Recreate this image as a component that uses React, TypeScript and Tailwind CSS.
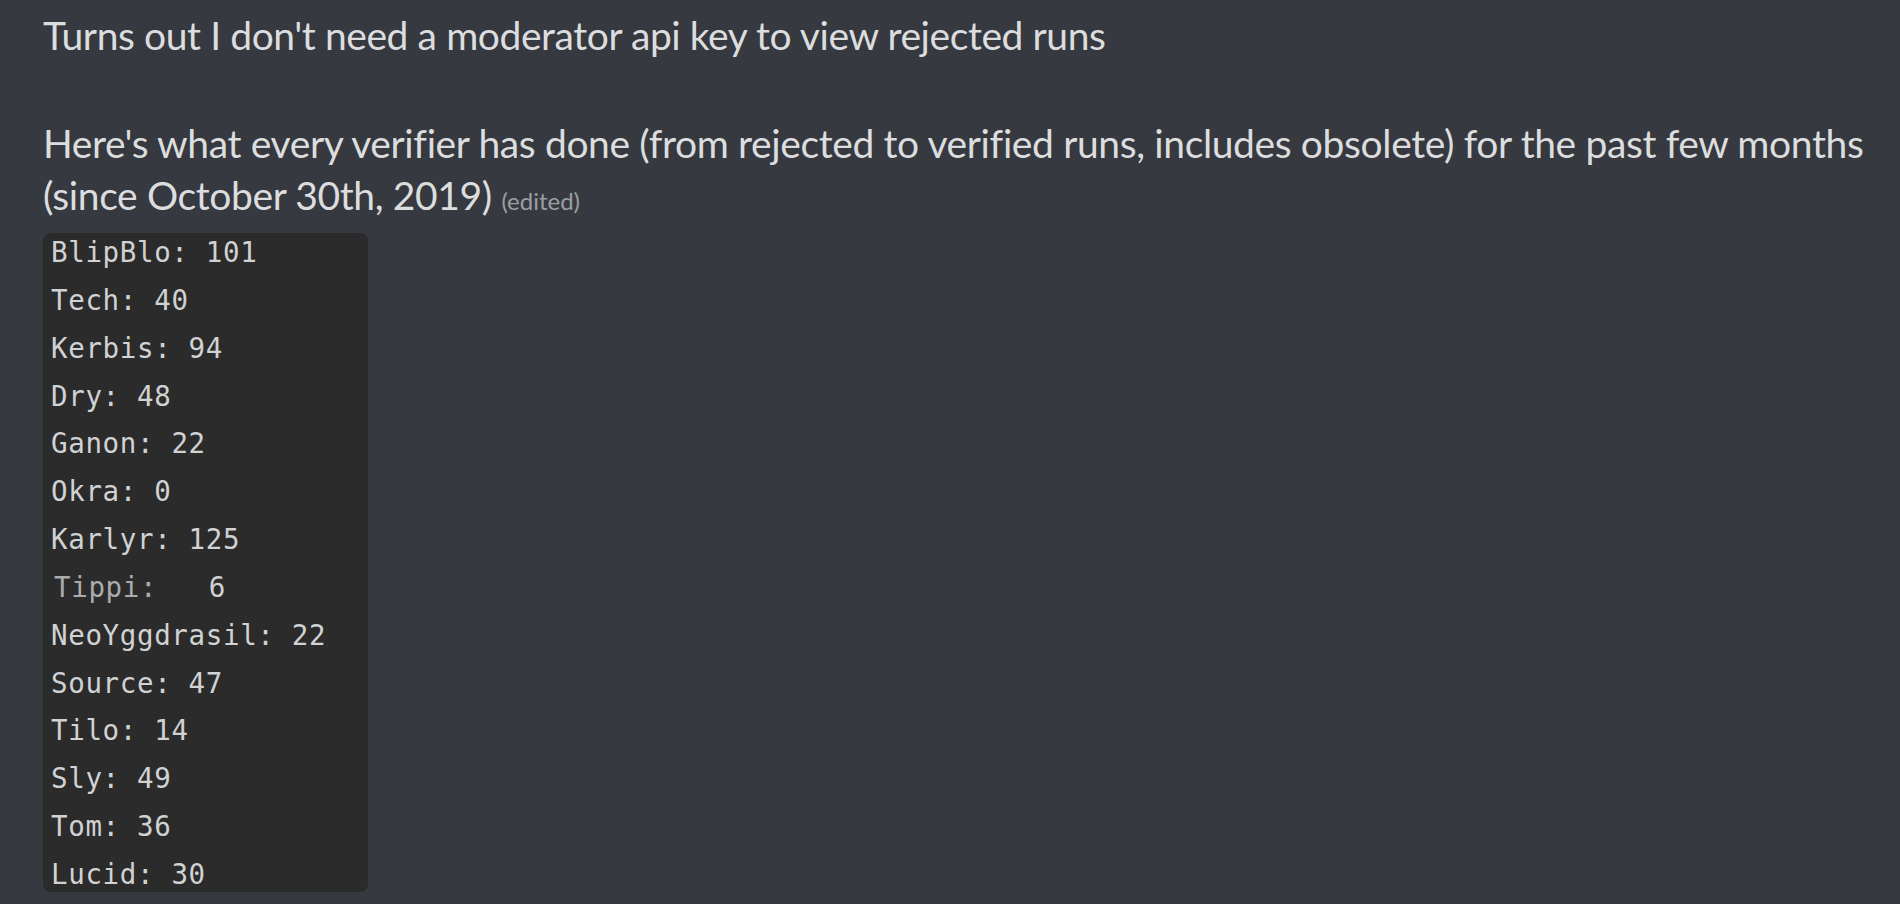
const rows: { name: string; value: string; faint?: boolean }[] = [
  { name: "BlipBlo:", value: "101" },
  { name: "Tech:", value: "40" },
  { name: "Kerbis:", value: "94" },
  { name: "Dry:", value: "48" },
  { name: "Ganon:", value: "22" },
  { name: "Okra:", value: "0" },
  { name: "Karlyr:", value: "125" },
  { name: "Tippi:  ", value: "6", faint: true },
  { name: "NeoYggdrasil:", value: "22" },
  { name: "Source:", value: "47" },
  { name: "Tilo:", value: "14" },
  { name: "Sly:", value: "49" },
  { name: "Tom:", value: "36" },
  { name: "Lucid:", value: "30" },
];

function CodeBlock() {
  return (
    <div className="w-[325px] h-[659px] overflow-hidden rounded-lg bg-[#2b2b2b] pl-2 mt-[12px]">
      <pre className="-mt-[4px] font-['DejaVu_Sans_Mono',monospace] text-[27.5px] tracking-[0.64px] leading-[47.85px] text-[#d0d2d4]">
        {rows.map((r) =>
          r.faint ? (
            <div key={r.name} className="pl-[3px] whitespace-pre">
              <span className="text-[#a9abad]">{r.name}</span> {r.value}
            </div>
          ) : (
            <div key={r.name} className="whitespace-pre">
              {r.name} {r.value}
            </div>
          )
        )}
      </pre>
    </div>
  );
}

export default function App() {
  return (
    <div className="min-h-[904px] w-full bg-[#36393f] pl-[43px] pt-[9px] font-['Lato',sans-serif] text-[#dcddde]">
      <div className="text-[39px] leading-[52px] tracking-[-0.42px]">
        Turns out I don't need a moderator api key to view rejected runs
      </div>
      <div className="h-[56px]" />
      <div className="text-[39px] leading-[52px] tracking-[-0.38px] pr-[20px]">
        Here's what every verifier has done (from rejected to verified runs, includes obsolete) for the past few months
        (since October 30th, 2019){" "}
        <span className="text-[24px] leading-none tracking-normal text-[#9b9ea3]">(edited)</span>
      </div>
      <CodeBlock />
    </div>
  );
}
